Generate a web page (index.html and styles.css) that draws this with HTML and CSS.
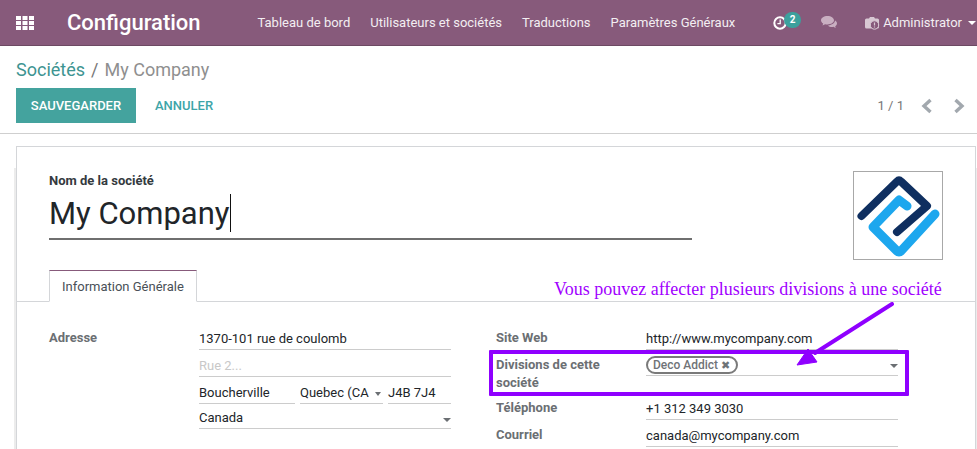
FILE: index.html
```html
<!DOCTYPE html>
<html lang="fr">
<head>
<meta charset="utf-8">
<title>Configuration</title>
<link rel="stylesheet" href="styles.css">
</head>
<body>
<header class="navbar">
  <svg class="apps" width="18" height="14" viewBox="0 0 18 14"><g fill="#fff"><rect x="0" y="0" width="5" height="4"/><rect x="6.5" y="0" width="5" height="4"/><rect x="13" y="0" width="5" height="4"/><rect x="0" y="5" width="5" height="4"/><rect x="6.5" y="5" width="5" height="4"/><rect x="13" y="5" width="5" height="4"/><rect x="0" y="10" width="5" height="4"/><rect x="6.5" y="10" width="5" height="4"/><rect x="13" y="10" width="5" height="4"/></g></svg>
  <div class="brand">Configuration</div>
  <nav class="menu">
    <a>Tableau de bord</a>
    <a>Utilisateurs et sociétés</a>
    <a>Traductions</a>
    <a>Paramètres Généraux</a>
  </nav>
  <div class="systray">
    <div class="activity">
      <svg width="14" height="14" viewBox="0 0 14 14"><circle cx="7" cy="7" r="5.7" fill="none" stroke="#fff" stroke-width="2"/><path d="M7.2 3.6V7.6H4.4" fill="none" stroke="#fff" stroke-width="1.3"/></svg>
      <span class="badge">2</span>
    </div>
    <svg class="chat" width="16" height="13" viewBox="0 0 16 13"><path d="M6.5 0C2.9 0 0 1.9 0 4.3c0 1.300.9 2.500 2.200 3.300L1.500 9.500l2.600-1.300c.8.2 1.600.3 2.400.3 3.600 0 6.500-1.900 6.500-4.200S10.100 0 6.500 0z" fill="#c9afc1"/><path d="M14 4.300c0 2.700-3 4.900-7 5.100.9 1 2.400 1.600 4 1.600.5 0 1-.1 1.500-.2l2.300 1.200-.6-1.800c1.100-.7 1.800-1.700 1.800-2.800 0-1.200-.8-2.200-2-2.900z" fill="#c9afc1"/></svg>
    <div class="user">
      <svg width="15" height="14" viewBox="0 0 15 14"><path d="M1.500 2.500H4L5 1h4l1 1.500h2.500A1.500 1.500 0 0 1 14 4v7a1.500 1.500 0 0 1-1.500 1.500h-11A1.500 1.500 0 0 1 0 11V4a1.500 1.500 0 0 1 1.500-1.500z" fill="#d8c8d3"/><circle cx="9.500" cy="9" r="4.200" fill="#875a7b" stroke="#d8c8d3"/><path d="M9.500 6.500v3M9.500 10.500v1" stroke="#d8c8d3" stroke-width="1.200"/></svg>
      <span>Administrator</span>
      <i class="caret caret-white"></i>
    </div>
  </div>
</header>

<section class="panel">
  <div class="breadcrumb"><a>Sociétés</a><span class="sep">/</span><span class="current">My Company</span></div>
  <div class="panel-row">
    <div class="buttons">
      <button class="btn-primary">Sauvegarder</button>
      <button class="btn-link">Annuler</button>
    </div>
    <div class="pager">
      <span>1 / 1</span>
      <svg width="13" height="16" viewBox="0 0 13 16"><path d="M10.500 2L4 8l6.500 6" fill="none" stroke="#a2a8ae" stroke-width="3.400"/></svg>
      <svg width="13" height="16" viewBox="0 0 13 16"><path d="M2.500 2L9 8l-6.500 6" fill="none" stroke="#a2a8ae" stroke-width="3.400"/></svg>
    </div>
  </div>
</section>

<main class="content">
  <div class="sheet">
    <div class="head">
      <div class="title">
        <label class="name-label">Nom de la société</label>
        <div class="name-input"><span>My Company</span><i class="cursor"></i></div>
      </div>
      <div class="logo">
        <svg width="88" height="87" viewBox="0 0 88 87">
          <path d="M81 42 47 79q-2 2-4 0L19 55 45 28l8 6" fill="none" stroke="#1da7ee" stroke-width="9" stroke-linejoin="round" stroke-linecap="round"/>
          <path d="M7.500 44 43 9.500q2-2 4 0L73 34 43 60" fill="none" stroke="#0f2f60" stroke-width="8" stroke-linejoin="round" stroke-linecap="round"/>
        </svg>
      </div>
    </div>
    <div class="tabs"><div class="tab">Information Générale</div></div>
    <div class="groups">
      <div class="group">
        <div class="label">Adresse</div>
        <div class="address">
          <div class="field">1370-101 rue de coulomb</div>
          <div class="field placeholder">Rue 2...</div>
          <div class="city-row">
            <div class="field city">Boucherville</div>
            <div class="field state">Quebec (CA<i class="caret"></i></div>
            <div class="field zip">J4B 7J4</div>
          </div>
          <div class="field select country">Canada<i class="caret"></i></div>
        </div>
      </div>
      <div class="group right">
        <div class="label">Site Web</div>
        <div class="field">http://www.mycompany.com</div>
        <div class="label label-wrap">Divisions de cette société</div>
        <div class="field select tags"><span class="tag">Deco Addict <b>✖</b></span><i class="caret"></i></div>
        <div class="label">Téléphone</div>
        <div class="field">+1 312 349 3030</div>
        <div class="label">Courriel</div>
        <div class="field">canada@mycompany.com</div>
      </div>
    </div>
  </div>
</main>

<div class="note">Vous pouvez affecter plusieurs divisions à une société</div>
<div class="highlight"></div>
<svg class="arrow" width="120" height="80" viewBox="0 0 120 80"><path d="M107 2 30 51" stroke="#8f00ff" stroke-width="4" stroke-linecap="round" fill="none"/><path d="M12 63 23 47 32 60z" fill="#8f00ff" stroke="#8f00ff" stroke-width="1"/></svg>
</body>
</html>
```
FILE: styles.css
```css
* { box-sizing: border-box; }
html, body { margin: 0; padding: 0; height: 449px; overflow: hidden; }
body {
  position: relative;
  width: 977px;
  background: #fff;
  font-family: Roboto, "Liberation Sans", sans-serif;
  font-size: 13px;
  color: #212529;
}
.navbar {
  display: flex;
  align-items: center;
  height: 46px;
  background: #875a7b;
  border-bottom: 1px solid #6d4a63;
  color: #fff;
  padding-left: 16px;
}
.apps { flex: none; }
.brand { margin-left: 33px; font-size: 22px; font-weight: 500; width: 133px; white-space: nowrap; }
.menu { display: flex; gap: 20px; margin-left: 57.500px; color: #f3eef2; white-space: nowrap; }
.systray { display: flex; align-items: center; margin-left: auto; }
.activity { position: relative; width: 14px; height: 14px; margin-right: 34px; }
.activity svg { display: block; }
.badge {
  position: absolute;
  left: 11px;
  top: -4px;
  width: 17px;
  height: 16px;
  border-radius: 8px;
  background: #3ca09d;
  color: #fff;
  font-size: 10px;
  font-weight: 700;
  line-height: 15px;
  text-align: center;
}
.chat { margin-right: 28px; }
.user { display: flex; align-items: center; gap: 3px; color: #f3eef2; white-space: nowrap; margin-right: 1px; }
.caret {
  display: inline-block;
  width: 0;
  height: 0;
  border-left: 4px solid transparent;
  border-right: 4px solid transparent;
  border-top: 4px solid #6b6f73;
}
.caret-white { border-top-color: #fff; margin-left: 3px; }

.panel { height: 88px; padding: 12px 16px 0; border-bottom: 1px solid #cfcfcf; }
.breadcrumb { font-size: 18px; line-height: 24px; white-space: nowrap; }
.breadcrumb a { color: #3d9491; }
.sep { color: #777; margin: 0 6px; }
.current { color: #8f8f8f; }
.panel-row { display: flex; align-items: center; justify-content: space-between; margin-top: 6px; height: 35px; }
.buttons { display: flex; align-items: center; }
button { font-family: inherit; border: 0; cursor: pointer; text-transform: uppercase; font-size: 13px; font-weight: 500; padding: 0; }
.btn-primary { width: 120px; height: 35px; background: #44a39e; color: #fff; }
.btn-link { margin-left: 19px; background: none; color: #3da5a8; }
.pager { display: flex; align-items: center; color: #777; gap: 16px; margin-right: -5px; }
.pager svg:last-child { margin-left: 4px; }

.content { padding: 12px 1px 0 16px; }
.sheet {
  position: relative;
  height: 303px;
  background: #fff;
  border: 1px solid #d4d6d9;
  border-bottom: 0;
  padding-top: 24px;
}
.sheet::before, .sheet::after {
  content: "";
  position: absolute;
  top: 21px;
  bottom: 0;
  width: 2px;
  background: #ececec;
}
.sheet::before { left: -3px; }
.sheet::after { right: -2px; width: 1px; }
.head { display: flex; justify-content: space-between; padding: 0 32px; height: 99px; }
.title { width: 643px; }
.name-label { display: block; font-weight: 700; font-size: 13px; line-height: 19px; color: #343a40; }
.name-input {
  display: flex;
  align-items: center;
  height: 50px;
  padding-bottom: 2px;
  font-size: 31px;
  color: #212529;
  border-bottom: 2px solid #6f6f6f;
  white-space: nowrap;
}
.cursor { display: block; width: 1px; height: 38px; background: #111; }
.logo { width: 90px; height: 89px; border: 1px solid #a8a8a8; display: flex; align-items: center; justify-content: center; }

.tabs { height: 32px; border-bottom: 1px solid #d4d6d9; padding-left: 32px; }
.tab {
  width: 148px;
  height: 32px;
  line-height: 31px;
  padding-left: 12px;
  background: #fff;
  border: 1px solid #d4d6d9;
  border-top-color: #875a7b;
  border-bottom-color: #fff;
  color: #495057;
}

.groups { display: grid; grid-template-columns: 402px 402px; column-gap: 45px; padding: 21px 0 0 32px; }
.group { display: grid; grid-template-columns: 150px 252px; align-content: start; }
.label { font-weight: 700; color: #6b6f73; line-height: 18px; padding-top: 6px; }
.address { display: flex; flex-direction: column; }
.field { border-bottom: 1px solid #ccc; height: 27px; padding-top: 6px; line-height: 20px; color: #212529; white-space: nowrap; position: relative; }
.placeholder { color: #c8c8c8; }
.city-row { display: flex; gap: 5px; }
.city { width: 96px; }
.state { width: 83px; }
.state .caret { position: absolute; right: 2px; top: 15px; border-left-width: 3.500px; border-right-width: 3.500px; }
.zip { flex: 1; }
.country { height: 25px; padding-top: 4px; }
.select .caret { position: absolute; right: 0; top: 14px; }
.right .label-wrap { height: 43px; padding-right: 30px; }
.right .tags { height: 26px; padding-top: 6px; }
.tag {
  display: block;
  width: 92px;
  height: 18px;
  line-height: 14px;
  border: 2px solid #7a7a7a;
  border-radius: 9px;
  padding: 0 0 0 5px;
  color: #6f7377;
  font-size: 12px;
  font-weight: 500;
  white-space: nowrap;
}
.tag b { font-size: 11px; color: #6f7377; font-family: "DejaVu Sans", sans-serif; }
.note {
  position: absolute;
  left: 554px;
  top: 276px;
  font-family: "Liberation Serif", serif;
  font-size: 18px;
  line-height: 26px;
  color: #a100ff;
  white-space: nowrap;
}
.highlight { position: absolute; left: 489px; top: 350px; width: 420px; height: 46px; border: 4px solid #8f00ff; border-radius: 1px; }
.arrow { position: absolute; left: 785px; top: 302px; }
```
